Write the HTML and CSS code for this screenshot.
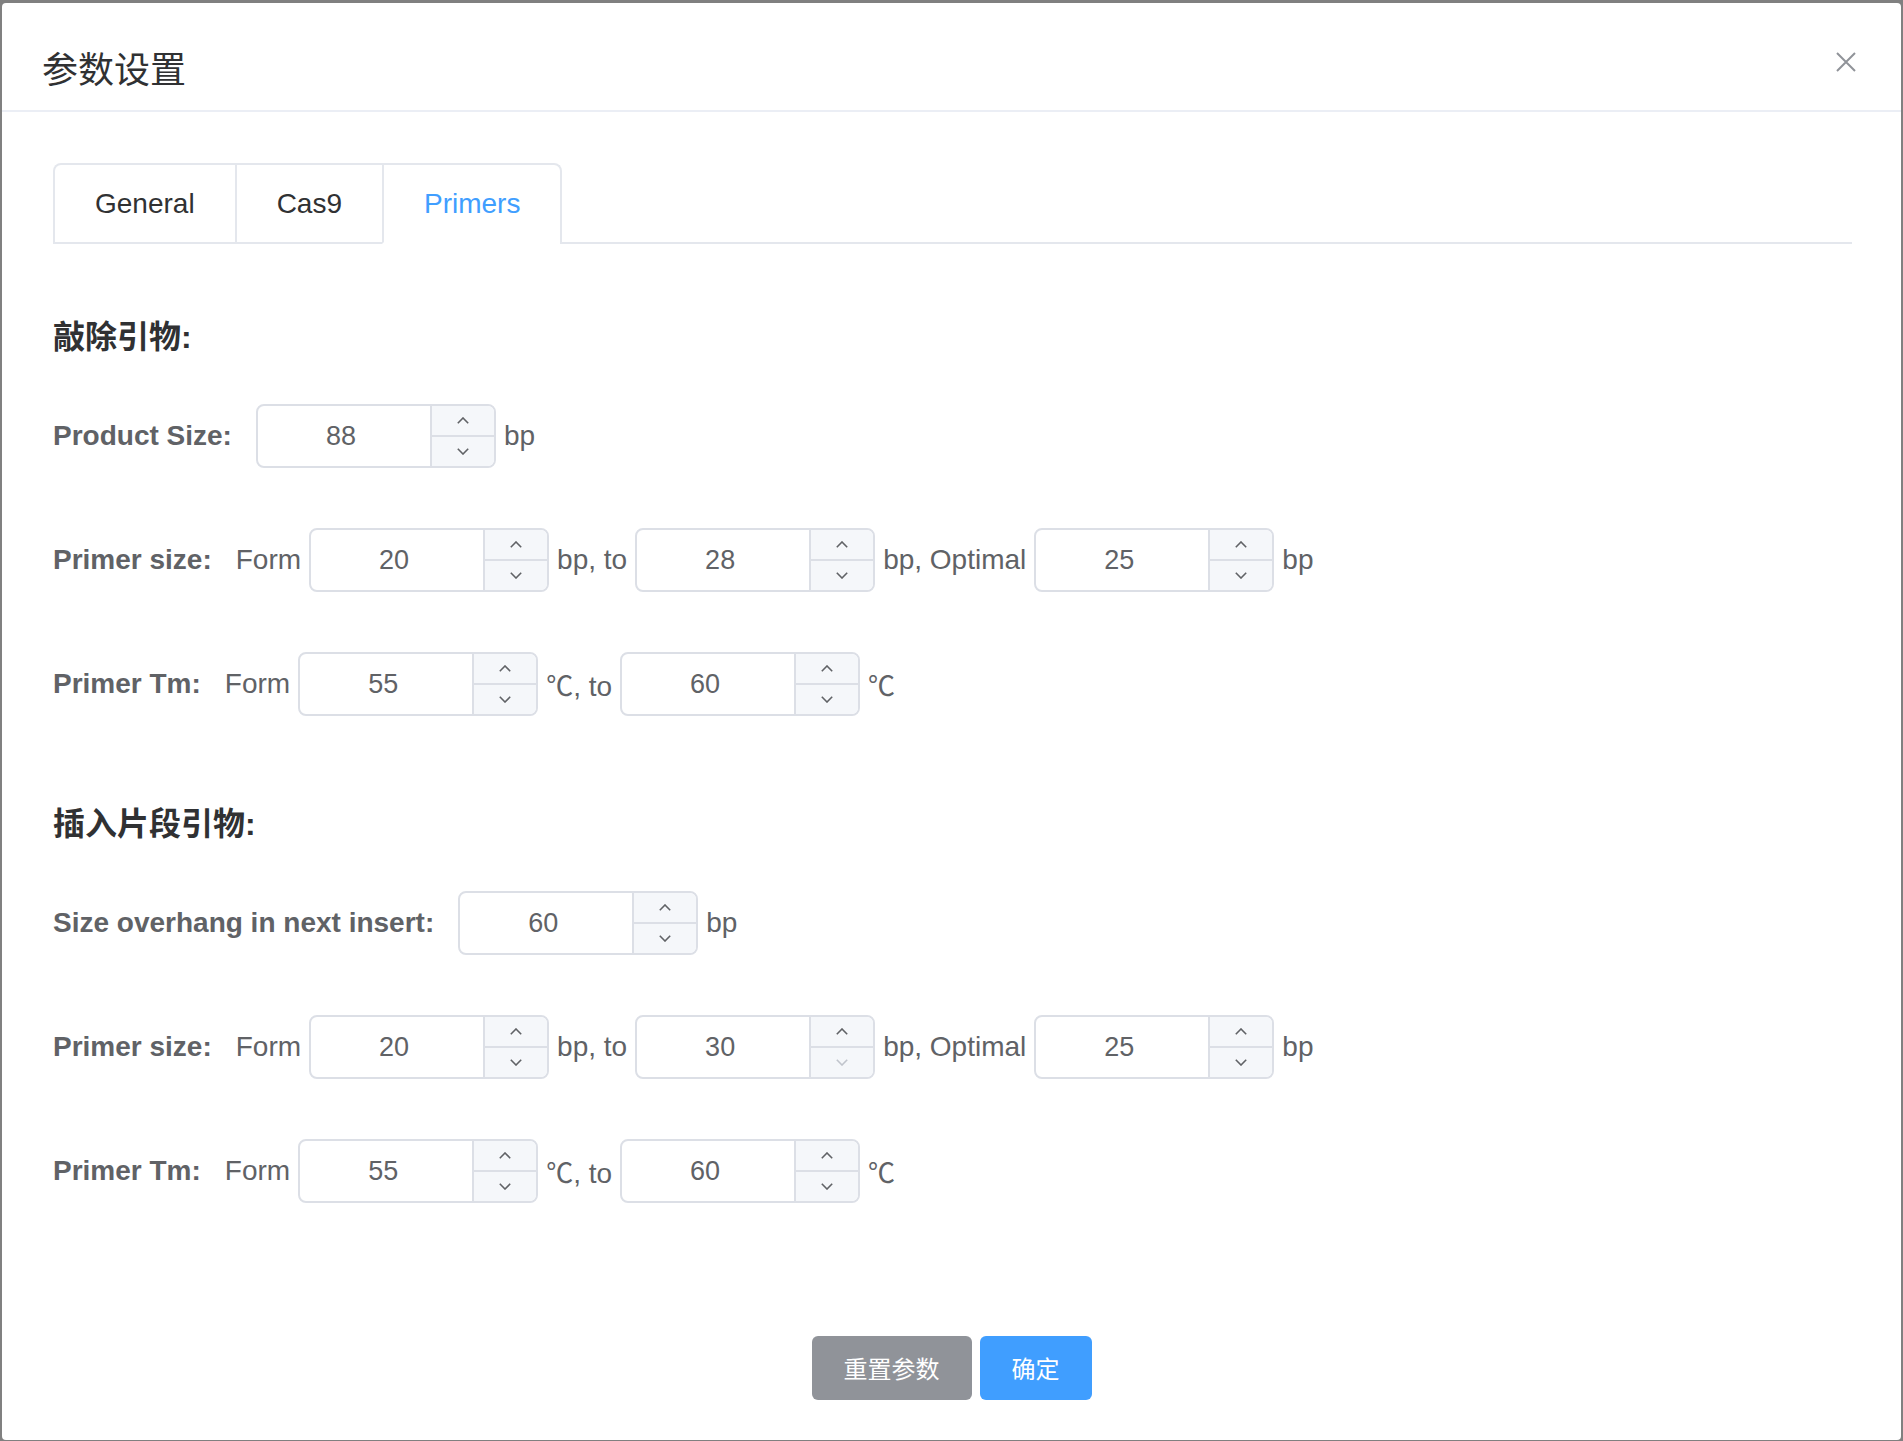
FILE: index.html
```html
<!DOCTYPE html>
<html lang="zh-CN">
<head>
<meta charset="utf-8">
<title>参数设置</title>
<link rel="stylesheet" href="styles.css">
</head>
<body>
<div class="dialog">
  <div class="dialog-header">
    <span class="dialog-title">参数设置</span>
    <button class="dialog-close" aria-label="close">
      <svg width="20" height="20" viewBox="0 0 20 20"><path d="M1 1 L19 19 M19 1 L1 19" stroke="#909399" stroke-width="2" fill="none"/></svg>
    </button>
  </div>
  <div class="dialog-body">
    <div class="tabs-header">
      <div class="tabs-nav">
        <div class="tab">General</div>
        <div class="tab">Cas9</div>
        <div class="tab active">Primers</div>
      </div>
    </div>

    <div class="section">
      <h3 class="section-title">敲除引物:</h3>
      <div class="row">
        <span class="label">Product Size:</span>
        <div class="num"><span class="num-value">88</span><span class="num-ctrl"><span class="num-btn"><svg width="12" height="7" viewBox="0 0 12 7"><polyline points="0.8,6.2 6,1 11.2,6.2"/></svg></span><span class="num-btn"><svg width="12" height="7" viewBox="0 0 12 7"><polyline points="0.8,0.8 6,6 11.2,0.8"/></svg></span></span></div>
        <span class="unit">bp</span>
      </div>
      <div class="row">
        <span class="label">Primer size:</span>
        <span class="unit">Form</span>
        <div class="num"><span class="num-value">20</span><span class="num-ctrl"><span class="num-btn"><svg width="12" height="7" viewBox="0 0 12 7"><polyline points="0.8,6.2 6,1 11.2,6.2"/></svg></span><span class="num-btn"><svg width="12" height="7" viewBox="0 0 12 7"><polyline points="0.8,0.8 6,6 11.2,0.8"/></svg></span></span></div>
        <span class="unit">bp, to</span>
        <div class="num"><span class="num-value">28</span><span class="num-ctrl"><span class="num-btn"><svg width="12" height="7" viewBox="0 0 12 7"><polyline points="0.8,6.2 6,1 11.2,6.2"/></svg></span><span class="num-btn"><svg width="12" height="7" viewBox="0 0 12 7"><polyline points="0.8,0.8 6,6 11.2,0.8"/></svg></span></span></div>
        <span class="unit">bp, Optimal</span>
        <div class="num"><span class="num-value">25</span><span class="num-ctrl"><span class="num-btn"><svg width="12" height="7" viewBox="0 0 12 7"><polyline points="0.8,6.2 6,1 11.2,6.2"/></svg></span><span class="num-btn"><svg width="12" height="7" viewBox="0 0 12 7"><polyline points="0.8,0.8 6,6 11.2,0.8"/></svg></span></span></div>
        <span class="unit">bp</span>
      </div>
      <div class="row">
        <span class="label">Primer Tm:</span>
        <span class="unit">Form</span>
        <div class="num"><span class="num-value">55</span><span class="num-ctrl"><span class="num-btn"><svg width="12" height="7" viewBox="0 0 12 7"><polyline points="0.8,6.2 6,1 11.2,6.2"/></svg></span><span class="num-btn"><svg width="12" height="7" viewBox="0 0 12 7"><polyline points="0.8,0.8 6,6 11.2,0.8"/></svg></span></span></div>
        <span class="unit"><span class="deg">℃</span>, to</span>
        <div class="num"><span class="num-value">60</span><span class="num-ctrl"><span class="num-btn"><svg width="12" height="7" viewBox="0 0 12 7"><polyline points="0.8,6.2 6,1 11.2,6.2"/></svg></span><span class="num-btn"><svg width="12" height="7" viewBox="0 0 12 7"><polyline points="0.8,0.8 6,6 11.2,0.8"/></svg></span></span></div>
        <span class="unit"><span class="deg">℃</span></span>
      </div>
    </div>

    <div class="section">
      <h3 class="section-title">插入片段引物:</h3>
      <div class="row">
        <span class="label">Size overhang in next insert:</span>
        <div class="num"><span class="num-value">60</span><span class="num-ctrl"><span class="num-btn"><svg width="12" height="7" viewBox="0 0 12 7"><polyline points="0.8,6.2 6,1 11.2,6.2"/></svg></span><span class="num-btn"><svg width="12" height="7" viewBox="0 0 12 7"><polyline points="0.8,0.8 6,6 11.2,0.8"/></svg></span></span></div>
        <span class="unit">bp</span>
      </div>
      <div class="row">
        <span class="label">Primer size:</span>
        <span class="unit">Form</span>
        <div class="num"><span class="num-value">20</span><span class="num-ctrl"><span class="num-btn"><svg width="12" height="7" viewBox="0 0 12 7"><polyline points="0.8,6.2 6,1 11.2,6.2"/></svg></span><span class="num-btn"><svg width="12" height="7" viewBox="0 0 12 7"><polyline points="0.8,0.8 6,6 11.2,0.8"/></svg></span></span></div>
        <span class="unit">bp, to</span>
        <div class="num"><span class="num-value">30</span><span class="num-ctrl"><span class="num-btn"><svg width="12" height="7" viewBox="0 0 12 7"><polyline points="0.8,6.2 6,1 11.2,6.2"/></svg></span><span class="num-btn disabled"><svg width="12" height="7" viewBox="0 0 12 7"><polyline points="0.8,0.8 6,6 11.2,0.8"/></svg></span></span></div>
        <span class="unit">bp, Optimal</span>
        <div class="num"><span class="num-value">25</span><span class="num-ctrl"><span class="num-btn"><svg width="12" height="7" viewBox="0 0 12 7"><polyline points="0.8,6.2 6,1 11.2,6.2"/></svg></span><span class="num-btn"><svg width="12" height="7" viewBox="0 0 12 7"><polyline points="0.8,0.8 6,6 11.2,0.8"/></svg></span></span></div>
        <span class="unit">bp</span>
      </div>
      <div class="row">
        <span class="label">Primer Tm:</span>
        <span class="unit">Form</span>
        <div class="num"><span class="num-value">55</span><span class="num-ctrl"><span class="num-btn"><svg width="12" height="7" viewBox="0 0 12 7"><polyline points="0.8,6.2 6,1 11.2,6.2"/></svg></span><span class="num-btn"><svg width="12" height="7" viewBox="0 0 12 7"><polyline points="0.8,0.8 6,6 11.2,0.8"/></svg></span></span></div>
        <span class="unit"><span class="deg">℃</span>, to</span>
        <div class="num"><span class="num-value">60</span><span class="num-ctrl"><span class="num-btn"><svg width="12" height="7" viewBox="0 0 12 7"><polyline points="0.8,6.2 6,1 11.2,6.2"/></svg></span><span class="num-btn"><svg width="12" height="7" viewBox="0 0 12 7"><polyline points="0.8,0.8 6,6 11.2,0.8"/></svg></span></span></div>
        <span class="unit"><span class="deg">℃</span></span>
      </div>
    </div>
  </div>
  <div class="dialog-footer">
    <button class="btn btn-info">重置参数</button>
    <button class="btn btn-primary">确定</button>
  </div>
</div>
</body>
</html>
```

FILE: styles.css
```css
html, body {
  margin: 0;
  padding: 0;
}
body {
  width: 1903px;
  height: 1441px;
  overflow: hidden;
  background: #808080;
  font-family: "Liberation Sans", Arial, "Noto Sans CJK SC", sans-serif;
  color: #606266;
}
.dialog {
  box-sizing: border-box;
  margin: 3px 2px 0 2px;
  width: 1899px;
  height: 1437px;
  background: #fff;
  border-radius: 4px;
  display: flex;
  flex-direction: column;
}
.dialog-header {
  box-sizing: border-box;
  height: 109px;
  padding: 40px 45px 0 40px;
  border-bottom: 2px solid #ebeef5;
  display: flex;
  justify-content: space-between;
  align-items: flex-start;
}
.dialog-title {
  font-family: "Noto Sans CJK SC", sans-serif;
  font-size: 36px;
  line-height: 48px;
  color: #303133;
}
.dialog-close {
  margin-top: 9px;
  padding: 0;
  border: 0;
  background: none;
  width: 20px;
  height: 20px;
  display: block;
}
.dialog-close svg {
  display: block;
}
.dialog-body {
  flex: 1;
  padding: 51px 49px 0 51px;
}
.tabs-header {
  display: flex;
  border-bottom: 2px solid #e4e7ed;
  margin-bottom: 71px;
}
.tabs-nav {
  display: flex;
  border: 2px solid #e4e7ed;
  border-bottom: none;
  border-radius: 8px 8px 0 0;
  margin-bottom: -2px;
}
.tab {
  box-sizing: border-box;
  height: 79px;
  line-height: 77px;
  padding: 0 40px;
  font-size: 28px;
  color: #303133;
  border-bottom: 2px solid transparent;
}
.tab + .tab {
  border-left: 2px solid #e4e7ed;
}
.tab.active {
  color: #409eff;
  border-bottom-color: #fff;
}
.section + .section {
  margin-top: 86px;
}
.section-title {
  margin: 0 0 45px;
  font-family: "Liberation Sans", "Noto Sans CJK SC", sans-serif;
  font-size: 32px;
  line-height: 44px;
  font-weight: bold;
  color: #303133;
}
.row {
  display: flex;
  align-items: center;
  gap: 8px;
  height: 64px;
  margin-bottom: 60px;
  font-size: 28px;
}
.label {
  font-weight: bold;
  color: #606266;
  padding-right: 16px;
}
.unit {
  color: #606266;
  white-space: nowrap;
}
.deg {
  font-family: "Noto Sans CJK SC", sans-serif;
  font-size: 27px;
}
.num {
  box-sizing: border-box;
  width: 240px;
  height: 64px;
  border: 2px solid #dcdfe6;
  border-radius: 8px;
  display: flex;
  overflow: hidden;
  background: #fff;
}
.num-value {
  flex: 1;
  display: flex;
  align-items: center;
  justify-content: center;
  padding-right: 6px;
  font-size: 27px;
  color: #606266;
}
.num-ctrl {
  width: 62px;
  border-left: 2px solid #dcdfe6;
  display: flex;
  flex-direction: column;
  background: #f5f7fa;
}
.num-btn {
  flex: 1;
  display: flex;
  align-items: center;
  justify-content: center;
}
.num-btn + .num-btn {
  border-top: 2px solid #dcdfe6;
}
.num-btn svg {
  display: block;
}
.num-btn polyline {
  fill: none;
  stroke: #606266;
  stroke-width: 1.6;
}
.num-btn.disabled polyline {
  stroke: #c0c4cc;
}
.dialog-footer {
  display: flex;
  justify-content: center;
  gap: 8px;
  padding: 20px 0 40px;
}
.btn {
  height: 64px;
  padding: 0 32px;
  border: 0;
  border-radius: 6px;
  font-family: "Noto Sans CJK SC", sans-serif;
  font-size: 24px;
  color: #fff;
  line-height: 64px;
}
.btn-info {
  background: #909399;
}
.btn-primary {
  background: #409eff;
}
```
